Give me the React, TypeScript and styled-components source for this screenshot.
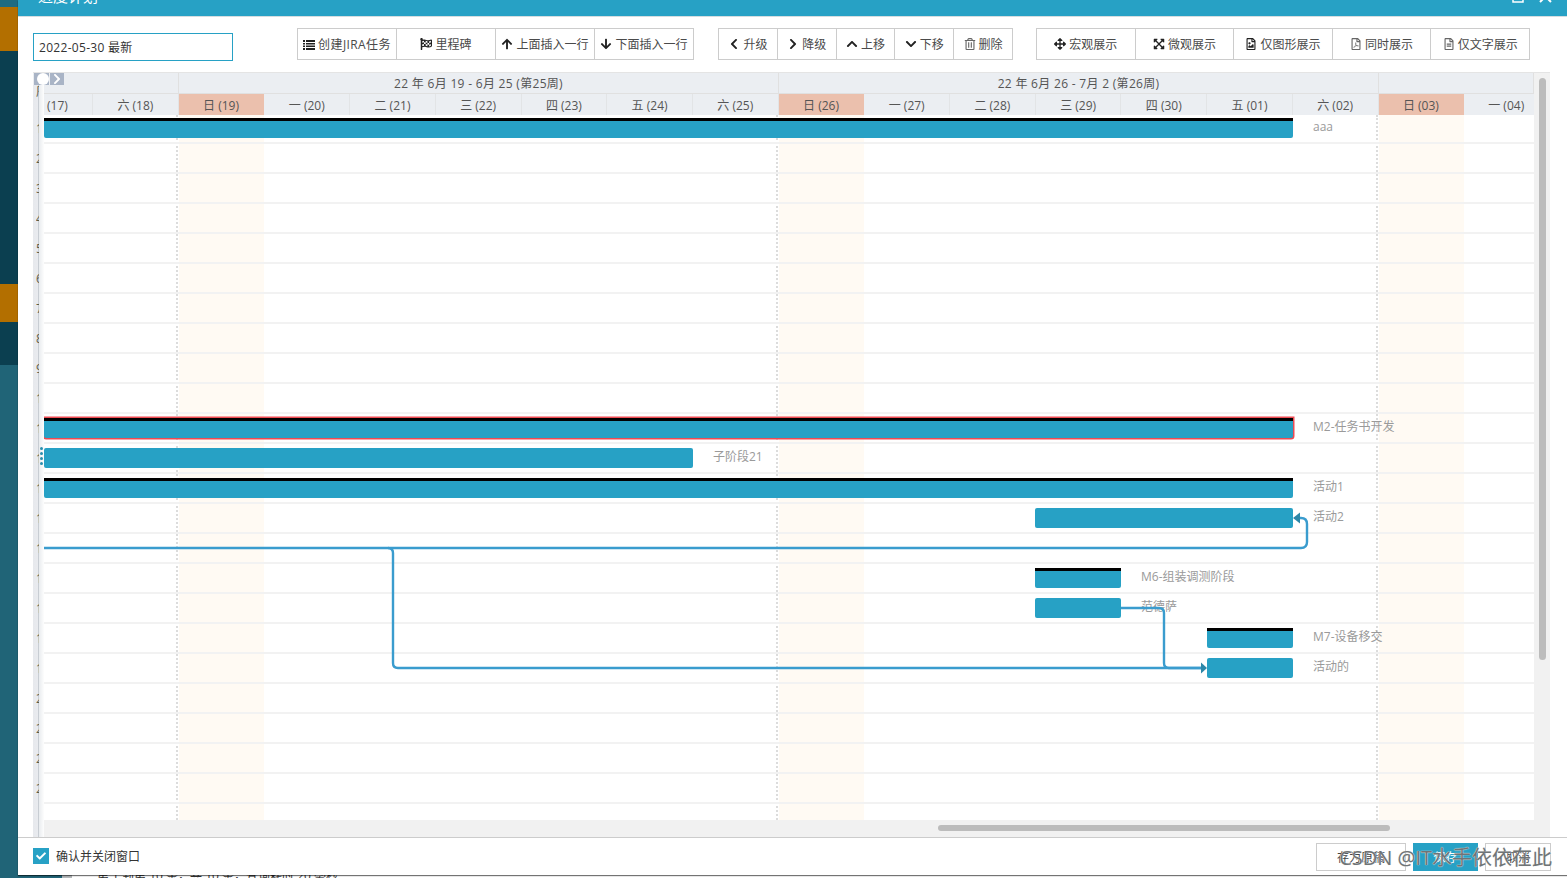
import styled, { createGlobalStyle } from "styled-components";
import {
  FaArrowDown,
  FaArrowUp,
  FaArrowsAlt,
  FaCheck,
  FaChevronDown,
  FaChevronLeft,
  FaChevronRight,
  FaChevronUp,
  FaExpandArrowsAlt,
  FaFlagCheckered,
  FaRegFileAlt,
  FaRegFileImage,
  FaRegFilePdf,
  FaRegTrashAlt,
} from "react-icons/fa";

const TEAL = "#27a1c5";
const FONT = `"Open Sans", "Noto Sans CJK SC", sans-serif`;
const DAY_WIDTH = 600 / 7;

const GlobalStyle = createGlobalStyle`
  html, body {
    margin: 0;
    padding: 0;
    overflow: hidden;
    background: #fff;
    font-family: ${FONT};
    font-size: 12px;
  }
  * {
    box-sizing: border-box;
  }
`;

const sidebar = [
  { h: 7, c: "#1d6b82" },
  { h: 44, c: "#b36f00" },
  { h: 233, c: "#0b3f50" },
  { h: 38, c: "#b36f00" },
  { h: 43, c: "#0b3f50" },
  { h: 513, c: "#206477" },
];

const weekdays = [
  ["六 (18)", false],
  ["日 (19)", true],
  ["一 (20)", false],
  ["二 (21)", false],
  ["三 (22)", false],
  ["四 (23)", false],
  ["五 (24)", false],
  ["六 (25)", false],
  ["日 (26)", true],
  ["一 (27)", false],
  ["二 (28)", false],
  ["三 (29)", false],
  ["四 (30)", false],
  ["五 (01)", false],
  ["六 (02)", false],
  ["日 (03)", true],
] as const;

type Task = {
  row: number;
  start: number;
  width: number;
  label: string;
  summary?: boolean;
  selected?: boolean;
};

const tasks: Task[] = [
  { row: 0, start: 0, width: 1249, label: "aaa", summary: true },
  { row: 10, start: 0, width: 1249, label: "M2-任务书开发", summary: true, selected: true },
  { row: 11, start: 0, width: 649, label: "子阶段21" },
  { row: 12, start: 0, width: 1249, label: "活动1", summary: true },
  { row: 13, start: 991, width: 258, label: "活动2" },
  { row: 15, start: 991, width: 86, label: "M6-组装调测阶段", summary: true },
  { row: 16, start: 991, width: 86, label: "范德萨" },
  { row: 17, start: 1163, width: 86, label: "M7-设备移交", summary: true },
  { row: 18, start: 1163, width: 86, label: "活动的" },
];

const rowIndexes = Array.from({ length: 23 }, (_, i) => i);

const Page = styled.div`
  display: flex;
  width: 1567px;
  height: 878px;
  overflow: hidden;
`;

const Sidebar = styled.div`
  display: flex;
  flex-direction: column;
  flex: 0 0 18px;
`;

const SidebarBlock = styled.div<{ $h: number; $c: string }>`
  height: ${(p) => p.$h}px;
  background: ${(p) => p.$c};
`;

const Stage = styled.div`
  display: flex;
  flex-direction: column;
  flex: 1;
  min-width: 0;
`;

const Dialog = styled.div`
  position: relative;
  z-index: 1;
  display: flex;
  flex-direction: column;
  flex: 0 0 875px;
  height: 875px;
  background: #fff;
  box-shadow: 0 1px 1px rgba(0, 0, 0, 0.55);
`;

const BehindStrip = styled.div`
  display: flex;
  height: 3px;
  overflow: hidden;
  background: #fff;
`;

const BehindTeal = styled.div`
  flex: 0 0 44px;
  background: #206477;
`;

const BehindGray = styled.div`
  flex: 0 0 10px;
  background: #b4b8ba;
`;

const BehindText = styled.div`
  padding-left: 25px;
  line-height: 9px;
  margin-top: -4px;
  color: #333;
  white-space: nowrap;
`;

const TitleBar = styled.div`
  display: flex;
  flex: 0 0 17px;
  min-height: 0;
  align-items: flex-end;
  justify-content: space-between;
  padding: 0 15px 12px 20px;
  overflow: hidden;
  background: ${TEAL};
  border-bottom: 1px solid #d5dde0;
`;

const Title = styled.div`
  color: #fff;
  font-size: 15px;
  line-height: 15px;
  white-space: nowrap;
`;

const WindowButtons = styled.div`
  display: flex;
  gap: 15px;
  margin-bottom: 1px;
  color: #fff;
`;

const Toolbar = styled.div`
  display: flex;
  flex: 0 0 55px;
  min-height: 0;
  align-items: flex-start;
  padding-left: 15px;
`;

const VersionInput = styled.input`
  width: 200px;
  height: 28px;
  margin: 16px 64px 0 0;
  padding: 0 5px;
  border: 1px solid ${TEAL};
  outline: none;
  color: #333;
  font-family: ${FONT};
  font-size: 12px;
  letter-spacing: 0.3px;
`;

const ButtonGroup = styled.div<{ $count: number; $width: number; $gap?: number }>`
  display: grid;
  grid-template-columns: repeat(${(p) => p.$count}, 1fr);
  width: ${(p) => p.$width}px;
  height: 32px;
  margin: 11px ${(p) => p.$gap ?? 0}px 0 0;
  border: 1px solid #ccc;
  border-right: 0;
`;

const ToolButton = styled.button<{ $spacing?: number }>`
  display: flex;
  align-items: center;
  justify-content: center;
  gap: 3px;
  min-width: 0;
  padding: 0;
  border: 0;
  border-right: 1px solid #ccc;
  background: #fff;
  color: #4a4a4a;
  font-family: ${FONT};
  font-size: 12px;
  letter-spacing: ${(p) => p.$spacing ?? 0}px;
  white-space: nowrap;

  svg {
    flex: none;
    color: #222;
    font-size: 12px;
  }
`;

const MutedIcon = styled.span`
  display: inline-flex;
  svg {
    color: #666;
  }
`;

const GanttPanel = styled.div`
  display: flex;
  flex: 0 0 765px;
  min-height: 0;
  width: 1517px;
  margin-left: 15px;
  border-top: 1px solid #e4e4e4;
  background: #f1f1f1;
`;

const GanttMain = styled.div`
  position: relative;
  display: flex;
  flex-direction: column;
  width: 1501px;
`;

const WeekRow = styled.div`
  display: flex;
  flex: 0 0 21px;
  min-height: 0;
  overflow: hidden;
  background: #ebeef2;
  border-bottom: 1px solid #e0e0e0;
`;

const WeekCell = styled.div<{ $width: number }>`
  flex: 0 0 ${(p) => p.$width}px;
  border-right: 1px solid #e0e0e0;
  color: #555;
  letter-spacing: 0.3px;
  line-height: 22px;
  text-align: center;
`;

const DayRow = styled.div`
  display: flex;
  flex: 0 0 21px;
  min-height: 0;
  overflow: hidden;
  background: #ebeef2;
`;

const DayCell = styled.div<{ $sunday?: boolean }>`
  flex: 0 0 ${DAY_WIDTH}px;
  border-right: 1px solid ${(p) => (p.$sunday ? "#ebc0ad" : "#e2e4e6")};
  background: ${(p) => (p.$sunday ? "#ebc0ad" : "transparent")};
  color: #555;
  line-height: 23px;
  text-align: center;
`;

const FirstDayCell = styled(DayCell)`
  flex: 0 0 60px;
  padding-left: 14px;
  text-align: left;
`;

const LastDayCell = styled(DayCell)`
  flex: 1;
  padding-left: 24px;
  border-right: 0;
  text-align: left;
  white-space: nowrap;
`;

const Canvas = styled.div`
  position: relative;
  flex: 0 0 705px;
  min-height: 0;
  margin-left: 11px;
  overflow: hidden;
  background: #fff;
`;

const ColumnLayer = styled.div`
  position: absolute;
  inset: 0;
  display: flex;
`;

const DayColumn = styled.div<{ $width: number; $weekend?: boolean }>`
  position: relative;
  flex: 0 0 ${(p) => p.$width}px;
  background: ${(p) => (p.$weekend ? "#fffaf3" : "transparent")};

  ${(p) =>
    p.$weekend
      ? `&::before {
    content: "";
    position: absolute;
    top: 0;
    bottom: 0;
    left: -3px;
    border-left: 2px dotted #dcdcdc;
  }`
      : ""}
`;

const RowList = styled.div`
  position: relative;
  display: flex;
  flex-direction: column;
`;

const TaskRow = styled.div<{ $first?: boolean; $start: number }>`
  display: flex;
  align-items: flex-start;
  flex: 0 0 ${(p) => (p.$first ? 29 : 30)}px;
  min-height: 0;
  padding-top: ${(p) => (p.$first ? 3 : 4)}px;
  padding-left: ${(p) => p.$start}px;
  border-bottom: 2px solid #f2f2f2;
`;

const Bar = styled.div<{ $width: number; $summary?: boolean; $selected?: boolean }>`
  flex: 0 0 ${(p) => p.$width}px;
  height: 20px;
  border-top: ${(p) => (p.$summary ? "3px solid #000" : "0")};
  border-radius: ${(p) => (p.$summary ? "0 0 2px 2px" : "2px")};
  background: ${TEAL};
  box-shadow: ${(p) => (p.$selected ? "0 0 0 1.5px #ee4a52" : "none")};
`;

const BarLabel = styled.div`
  margin: -1px 0 0 20px;
  color: #9a9a9a;
  line-height: 20px;
  white-space: nowrap;
`;

const Links = styled.svg`
  position: absolute;
  top: 0;
  left: 0;
  fill: none;
  stroke: #3a9cce;
  stroke-width: 2.4;
`;

const Rail = styled.div`
  position: absolute;
  top: 12px;
  bottom: 0;
  left: 0;
  width: 11px;
  padding-left: 3px;
  overflow: hidden;
  background: linear-gradient(90deg, #e7e9ed 0, #e9ebef 5px, #c8cdd3 5px, #c8cdd3 6px, #e9ecef 6px, #fdfdfd 11px);
`;

const RailNumber = styled.div<{ $head?: boolean }>`
  width: 3px;
  height: ${(p) => (p.$head ? 29 : 30)}px;
  overflow: hidden;
  color: #5d5d4a;
  font-size: 12px;
  line-height: ${(p) => (p.$head ? 14 : 30)}px;
`;

const Toggle = styled.div`
  position: absolute;
  top: 0;
  left: 1px;
  display: flex;
  align-items: center;
  justify-content: flex-end;
  width: 30px;
  height: 12px;
  padding-right: 1px;
  background: linear-gradient(90deg, #a9b4c6 0, #a9b4c6 15px, #eef0f3 15px, #eef0f3 16px, #a9b4c6 16px);
  color: #fff;
  font-size: 12px;
`;

const ToggleKnob = styled.span`
  position: absolute;
  top: 0;
  left: 3px;
  width: 12px;
  height: 12px;
  border-radius: 50%;
  background: #fff;
`;

const DragHandle = styled.div`
  position: absolute;
  top: 374px;
  left: 7px;
  display: flex;
  flex-direction: column;
  gap: 2px;
`;

const DragDot = styled.span`
  width: 3px;
  height: 3px;
  border-radius: 50%;
  background: #2a8fae;
`;

const HScroll = styled.div`
  flex: 0 0 18px;
  min-height: 0;
  padding: 5px 0 0 905px;
`;

const HThumb = styled.div`
  width: 452px;
  height: 6px;
  border-radius: 3px;
  background: #bcbcbc;
`;

const VScroll = styled.div`
  flex: 0 0 16px;
  padding: 5px 0 0 5px;
`;

const VThumb = styled.div`
  width: 7px;
  height: 582px;
  border-radius: 4px;
  background: #bcbcbc;
`;

const Footer = styled.div`
  position: relative;
  display: flex;
  flex: 0 0 38px;
  min-height: 0;
  align-items: center;
  gap: 7px;
  padding: 0 16px 0 15px;
  border-top: 1px solid #ccc;
`;

const CheckBox = styled.span`
  display: flex;
  align-items: center;
  justify-content: center;
  width: 16px;
  height: 16px;
  margin-top: -1px;
  background: ${TEAL};
  color: #fff;
  font-size: 10px;
`;

const CheckLabel = styled.span`
  flex: 1;
  margin-top: -2px;
  color: #333;
`;

const FooterButton = styled.button<{ $primary?: boolean; $width: number }>`
  width: ${(p) => p.$width}px;
  height: 28px;
  border: 1px solid ${(p) => (p.$primary ? TEAL : "#ccc")};
  background: ${(p) => (p.$primary ? TEAL : "#fff")};
  color: ${(p) => (p.$primary ? "#fff" : "#444")};
  font-family: ${FONT};
  font-size: 12px;
`;

const Watermark = styled.div`
  position: absolute;
  top: 8px;
  right: 15px;
  color: #6f7476;
  font-size: 20px;
  line-height: 24px;
  text-shadow: 0 0 1px #e6e6e6, 0 0 1px #e6e6e6;
  white-space: nowrap;
  pointer-events: none;
`;

function ListIcon() {
  return (
    <svg width="12" height="11" viewBox="0 0 12 11" fill="currentColor">
      <path d="M0 1h2v2H0zM3 1h9v2H3zM0 4h2v1.500H0zM3 4h9v1.500H3zM0 6.500h2V8H0zM3 6.500h9V8H3zM0 9h2v2H0zM3 9h9v2H3z" />
    </svg>
  );
}

function ConnectorLines() {
  return (
    <Links width={1490} height={705}>
      <path d="M0 433H1257Q1263 433 1263 427V409Q1263 403 1257 403H1254" />
      <path d="M344 433Q349 433 349 438V548Q349 553 354 553H1160" />
      <path d="M1077 493H1115Q1120 493 1120 498V548Q1120 553 1125 553H1160" />
      <polygon points="1249,403 1256,397.500 1256,408.500" fill="#2d87a8" stroke="none" />
      <polygon points="1163,553 1157,547.500 1157,558.500" fill="#2d87a8" stroke="none" />
    </Links>
  );
}

export default function App() {
  return (
    <>
      <GlobalStyle />
      <Page>
        <Sidebar>
          {sidebar.map((block, i) => (
            <SidebarBlock key={i} $h={block.h} $c={block.c} />
          ))}
        </Sidebar>
        <Stage>
          <Dialog>
            <TitleBar>
              <Title>进度计划</Title>
              <WindowButtons>
                <svg width="12" height="12" viewBox="0 0 12 12" fill="none" stroke="#fff" strokeWidth="1.5">
                  <rect x="1" y="1" width="10" height="10" />
                </svg>
                <svg width="13" height="12" viewBox="0 0 13 12" fill="none" stroke="#fff" strokeWidth="2">
                  <path d="M1 0L12 11M12 0L1 11" />
                </svg>
              </WindowButtons>
            </TitleBar>

            <Toolbar>
              <VersionInput readOnly value="2022-05-30 最新" />
              <ButtonGroup $count={4} $width={397} $gap={24}>
                <ToolButton $spacing={0.4}><ListIcon />创建JIRA任务</ToolButton>
                <ToolButton><FaFlagCheckered />里程碑</ToolButton>
                <ToolButton><FaArrowUp />上面插入一行</ToolButton>
                <ToolButton><FaArrowDown />下面插入一行</ToolButton>
              </ButtonGroup>
              <ButtonGroup $count={5} $width={295} $gap={23}>
                <ToolButton><FaChevronLeft />升级</ToolButton>
                <ToolButton><FaChevronRight />降级</ToolButton>
                <ToolButton><FaChevronUp />上移</ToolButton>
                <ToolButton><FaChevronDown />下移</ToolButton>
                <ToolButton><MutedIcon><FaRegTrashAlt /></MutedIcon>删除</ToolButton>
              </ButtonGroup>
              <ButtonGroup $count={5} $width={494}>
                <ToolButton><FaArrowsAlt />宏观展示</ToolButton>
                <ToolButton><FaExpandArrowsAlt />微观展示</ToolButton>
                <ToolButton><FaRegFileImage />仅图形展示</ToolButton>
                <ToolButton><MutedIcon><FaRegFilePdf /></MutedIcon>同时展示</ToolButton>
                <ToolButton><MutedIcon><FaRegFileAlt /></MutedIcon>仅文字展示</ToolButton>
              </ButtonGroup>
            </Toolbar>

            <GanttPanel>
              <GanttMain>
                <WeekRow>
                  <WeekCell $width={146} />
                  <WeekCell $width={600}>22 年 6月 19 - 6月 25 (第25周)</WeekCell>
                  <WeekCell $width={600}>22 年 6月 26 - 7月 2 (第26周)</WeekCell>
                  <WeekCell $width={155} />
                </WeekRow>
                <DayRow>
                  <FirstDayCell>(17)</FirstDayCell>
                  {weekdays.map(([text, sunday]) => (
                    <DayCell key={text} $sunday={sunday}>{text}</DayCell>
                  ))}
                  <LastDayCell>一 (04)</LastDayCell>
                </DayRow>

                <Canvas>
                  <ColumnLayer>
                    <DayColumn $width={49} />
                    {weekdays.map(([text, sunday]) => (
                      <DayColumn key={text} $width={DAY_WIDTH} $weekend={sunday} />
                    ))}
                  </ColumnLayer>
                  <RowList>
                    {rowIndexes.map((row) => {
                      const task = tasks.find((t) => t.row === row);
                      return (
                        <TaskRow key={row} $first={row === 0} $start={task ? task.start : 0}>
                          {task ? (
                            <>
                              <Bar $width={task.width} $summary={task.summary} $selected={task.selected} />
                              <BarLabel>{task.label}</BarLabel>
                            </>
                          ) : null}
                        </TaskRow>
                      );
                    })}
                  </RowList>
                  <ConnectorLines />
                </Canvas>
                <HScroll>
                  <HThumb />
                </HScroll>

                <Rail>
                  <RailNumber $head>序</RailNumber>
                  {rowIndexes.map((row) => (
                    <RailNumber key={row}>{row + 1}</RailNumber>
                  ))}
                </Rail>
                <Toggle>
                  <FaChevronRight />
                  <ToggleKnob />
                </Toggle>
                <DragHandle>
                  <DragDot />
                  <DragDot />
                  <DragDot />
                  <DragDot />
                </DragHandle>
              </GanttMain>
              <VScroll>
                <VThumb />
              </VScroll>
            </GanttPanel>

            <Footer>
              <CheckBox><FaCheck /></CheckBox>
              <CheckLabel>确认并关闭窗口</CheckLabel>
              <FooterButton $width={90}>存为原稿</FooterButton>
              <FooterButton $width={65} $primary>保存</FooterButton>
              <FooterButton $width={66}>取消</FooterButton>
              <Watermark>CSDN @IT水手依依在此</Watermark>
            </Footer>
          </Dialog>
          <BehindStrip>
            <BehindTeal />
            <BehindGray />
            <BehindText>第 1 到第 10 条，共 10 条，查询耗时 20 毫秒</BehindText>
          </BehindStrip>
        </Stage>
      </Page>
    </>
  );
}
